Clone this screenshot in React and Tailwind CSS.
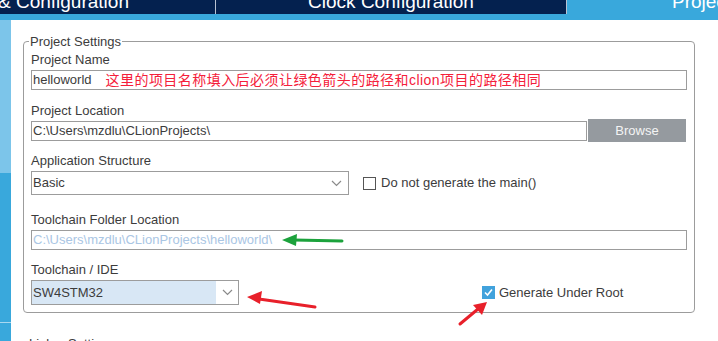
import React from "react"

const Chevron = () => (
  <svg width="11" height="7" viewBox="0 0 11 7" className="text-[#8a8a8a]">
    <path d="M1 1 L5.5 5.5 L10 1" fill="none" stroke="currentColor" strokeWidth="1.2" />
  </svg>
)

const Label = ({ children, className = "" }) => (
  <div className={"text-[13px] leading-[16px] text-[#3c3c3c] " + className}>{children}</div>
)

export default function App() {
  return (
    <div
      className="w-[718px] h-[341px] overflow-hidden bg-white relative"
      style={{ fontFamily: '"Liberation Sans", Arial, "Noto Sans CJK SC", sans-serif' }}
    >
      {/* tab bar */}
      <div className="h-[14px] bg-[#04214f] flex overflow-hidden text-white text-[19px] leading-[19px]">
        <div className="w-[216px] border-r border-[#b8c2d2] overflow-hidden whitespace-nowrap">
          <div className="-mt-[8px] -ml-[2px]">&amp; Configuration</div>
        </div>
        <div className="w-[351px] border-r border-[#b8c2d2] flex justify-center whitespace-nowrap">
          <div className="-mt-[8px]">Clock Configuration</div>
        </div>
        <div className="flex-1 bg-[#39a8dc] whitespace-nowrap overflow-hidden">
          <div className="-mt-[8px] pl-[105px]">Project Manager</div>
        </div>
      </div>
      <div className="h-[6px] bg-[#39a8dc]" />

      <div className="flex h-[321px]">
        {/* left sidebar */}
        <div className="w-[11px] flex flex-col">
          <div className="h-[153px] bg-[#7cc5ea]" />
          <div className="h-[150px] bg-[#39a8dc] border-b border-[#a9d8f0]" />
          <div className="flex-1 bg-[#39a8dc]" />
        </div>

        {/* content */}
        <div className="flex-1 pl-[12px] pt-[14px]">
          <fieldset className="w-[672px] border border-[#9c9c9c] rounded-[4px] px-[7px] pb-[7px] pt-[3px]">
            <legend className="-ml-[2px] px-[1px] text-[13px] leading-[15px] text-[#3c3c3c]">Project Settings</legend>

            <Label>Project Name</Label>
            <div className="mt-[2px] h-[20px] border border-[#9c9c9c] flex items-center px-[1px] text-[13px] whitespace-nowrap">
              <span className="text-[#3c3c3c]">helloworld</span>
              <span className="ml-[14px] text-[#f5203a] text-[14px] tracking-[0.45px]">
                这里的项目名称填入后必须让绿色箭头的路径和clion项目的路径相同
              </span>
            </div>

            <Label className="mt-[13px]">Project Location</Label>
            <div className="flex items-center gap-[1px] mt-[0px] h-[23px]">
              <div className="w-[556px] h-[20px] border border-[#9c9c9c] flex items-center px-[1px] text-[13px] text-[#3c3c3c]">
                C:\Users\mzdlu\CLionProjects\
              </div>
              <div className="w-[98px] h-[23px] bg-[#959a9f] text-[#f4f4f4] text-[13px] flex items-center justify-center">
                Browse
              </div>
            </div>

            <Label className="mt-[11px]">Application Structure</Label>
            <div className="flex items-center mt-[2px]">
              <div className="w-[318px] h-[24px] border border-[#9c9c9c] flex items-center justify-between pl-[1px] pr-[6px] text-[13px] text-[#3c3c3c]">
                <span>Basic</span>
                <Chevron />
              </div>
              <div className="ml-[14px] w-[13px] h-[13px] border border-[#555] bg-white" />
              <span className="ml-[5px] text-[13px] text-[#3c3c3c]">Do not generate the main()</span>
            </div>

            <Label className="mt-[17px]">Toolchain Folder Location</Label>
            <div className="mt-[2px] h-[20px] border border-[#9c9c9c] flex items-center px-[1px] text-[13px] text-[#aac6e4]">
              C:\Users\mzdlu\CLionProjects\helloworld\
            </div>

            <Label className="mt-[12px]">Toolchain / IDE</Label>
            <div className="flex items-center mt-[2px]">
              <div className="w-[208px] h-[25px] border border-[#9c9c9c] flex text-[13px] text-[#3c3c3c]">
                <div className="w-[184px] bg-[#d8e7f5] flex items-center pl-[1px]">SW4STM32</div>
                <div className="flex-1 flex items-center justify-center">
                  <Chevron />
                </div>
              </div>
              <div className="ml-[243px] w-[13px] h-[13px] bg-[#41a2dc] flex items-center justify-center">
                <svg width="11" height="11" viewBox="0 0 11 11">
                  <path d="M2 5.5 L4.5 8 L9 2.5" fill="none" stroke="white" strokeWidth="1.6" />
                </svg>
              </div>
              <span className="ml-[4px] text-[13px] text-[#3c3c3c]">Generate Under Root</span>
            </div>
          </fieldset>

          <div className="mt-[23px] ml-[6px] text-[13px] leading-[16px] text-[#3c3c3c]">Linker Settings</div>
        </div>
      </div>

      {/* annotation arrows */}
      <svg className="absolute left-0 top-0 pointer-events-none" width="718" height="341">
        <g>
          <line x1="342" y1="241" x2="294" y2="240" stroke="#1ca23c" strokeWidth="3" strokeLinecap="round" />
          <polygon points="282,240 297,234 296,246" fill="#1ca23c" />
        </g>
        <g>
          <line x1="315" y1="307" x2="259" y2="299" stroke="#e8202a" strokeWidth="3" strokeLinecap="round" />
          <polygon points="247,297 262,291 260,304" fill="#e8202a" />
        </g>
        <g>
          <line x1="460" y1="324" x2="478" y2="309" stroke="#e8202a" strokeWidth="3" strokeLinecap="round" />
          <polygon points="487,302 482,315 473,305" fill="#e8202a" />
        </g>
      </svg>
    </div>
  )
}
